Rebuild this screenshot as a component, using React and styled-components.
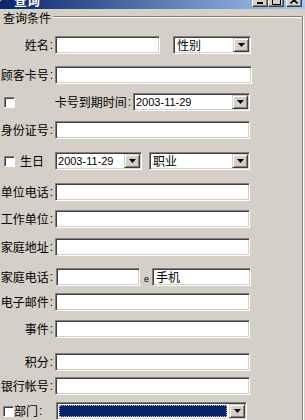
import React from 'react';
import styled, { createGlobalStyle } from 'styled-components';

const GlobalStyle = createGlobalStyle`
  html, body {
    margin: 0;
    padding: 0;
    background: #d4d0c8;
  }
  body {
    font-family: "Noto Sans CJK SC", "Liberation Sans", sans-serif;
  }
`;

const cjk = `"Noto Sans CJK SC", "Liberation Sans", sans-serif`;

const Win = styled.div`
  width: 305px;
  height: 420px;
  overflow: hidden;
  background: #d4d0c8;
  color: #000;
  font-family: ${cjk};
  font-size: 12px;
`;

const TitleBar = styled.div`
  height: 18px;
  margin-top: -9px;
  display: flex;
  align-items: center;
  padding-right: 3px;
  background: linear-gradient(to right, #0a246a, #a6caf0);
`;

const TitleIcon = styled.svg`
  margin-left: -9px;
  flex-shrink: 0;
`;

const Title = styled.span`
  margin-left: 7px;
  color: #fff;
  font-weight: bold;
  font-size: 13px;
  line-height: 18px;
`;

const CapButtons = styled.div`
  margin-left: auto;
  display: flex;
`;

const CapBtn = styled.div`
  width: 16px;
  height: 14px;
  box-sizing: border-box;
  margin-left: ${(p) => p.$gap || 0}px;
  display: flex;
  align-items: center;
  justify-content: center;
  background: #d4d0c8;
  border: 1px solid;
  border-color: #fff #404040 #404040 #fff;
  box-shadow: inset -1px -1px 0 #808080;
`;

const Group = styled.div`
  margin-top: 7px;
  width: 303px;
  height: 420px;
  box-sizing: border-box;
  border-top: 1px solid #808080;
  border-right: 1px solid #808080;
  box-shadow: inset 0 1px 0 #fff, 1px 0 0 #fff;
`;

const Legend = styled.div`
  width: max-content;
  margin-top: -6px;
  padding: 0 2px 0 3px;
  background: #d4d0c8;
  font-size: 12px;
  line-height: 13px;
`;

const Row = styled.div`
  display: flex;
  align-items: center;
  height: 18px;
  margin-top: ${(p) => p.$mt}px;
`;

const Label = styled.div`
  flex-shrink: 0;
  display: flex;
  justify-content: ${(p) => (p.$left ? 'flex-start' : 'flex-end')};
  width: ${(p) => (p.$w ? `${p.$w}px` : 'auto')};
  margin-left: ${(p) => p.$ml || 0}px;
  padding-right: ${(p) => (p.$pr === undefined ? 1 : p.$pr)}px;
  white-space: nowrap;
  font-size: 12px;
  line-height: 14px;
`;

const Colon = styled.span`
  margin-left: 1px;
  font-family: "Liberation Sans", sans-serif;
  font-size: 12px;
`;

const Field = styled.div`
  flex-shrink: 0;
  box-sizing: border-box;
  width: ${(p) => p.$w}px;
  height: 18px;
  margin-left: ${(p) => p.$ml || 0}px;
  padding: 1px;
  display: flex;
  align-items: stretch;
  background: #fff;
  border: 1px solid;
  border-color: #808080 #fff #fff #808080;
  box-shadow: inset 1px 1px 0 #404040, inset -1px -1px 0 #d4d0c8;
`;

const TextInput = styled.input`
  flex: 1;
  min-width: 0;
  margin: 0;
  padding: 0 0 0 2px;
  border: none;
  outline: none;
  background: transparent;
  font-family: ${cjk};
  font-size: 12px;
  line-height: 14px;
  color: #000;
`;

const ComboText = styled.div`
  flex: 1;
  min-width: 0;
  display: flex;
  align-items: center;
  padding-left: ${(p) => (p.$date ? 1 : 2)}px;
  font-family: ${(p) => (p.$date ? '"Liberation Sans", sans-serif' : cjk)};
  font-size: ${(p) => (p.$date ? 11 : 12)}px;
  line-height: 14px;
  white-space: nowrap;
`;

const Selected = styled.div`
  flex: 1;
  margin: 1px 2px 1px 1px;
  background: #0a246a;
  border: 1px dotted #b8b8c8;
`;

const DropBtn = styled.div`
  width: 16px;
  flex-shrink: 0;
  box-sizing: border-box;
  display: flex;
  align-items: center;
  justify-content: center;
  background: #d4d0c8;
  border: 1px solid;
  border-color: #d4d0c8 #404040 #404040 #d4d0c8;
  box-shadow: inset 1px 1px 0 #fff, inset -1px -1px 0 #808080;
`;

const Check = styled.div`
  flex-shrink: 0;
  width: 11px;
  height: 11px;
  box-sizing: border-box;
  margin-left: ${(p) => p.$ml || 0}px;
  background: #fff;
  border: 1px solid;
  border-color: #808080 #fff #fff #808080;
  box-shadow: inset 1px 1px 0 #404040;
`;

const Tiny = styled.span`
  flex-shrink: 0;
  width: 5px;
  margin: 0 3px 0 4px;
  padding-top: 5px;
  font-family: "Liberation Sans", sans-serif;
  font-size: 9px;
  line-height: 9px;
`;

const Arrow = () => (
  <svg width="7" height="4" viewBox="0 0 7 4">
    <path d="M0 0H7L3.5 4Z" fill="#000" />
  </svg>
);

const Combo = ({ w, ml, date, children, selected }) => (
  <Field $w={w} $ml={ml}>
    {selected ? <Selected /> : <ComboText $date={date}>{children}</ComboText>}
    <DropBtn>
      <Arrow />
    </DropBtn>
  </Field>
);

const Input = ({ w, ml, value }) => (
  <Field $w={w} $ml={ml}>
    <TextInput defaultValue={value || ''} readOnly />
  </Field>
);

const FieldLabel = ({ children, w = 53, ...rest }) => (
  <Label $w={w} {...rest}>
    {children}
    <Colon>:</Colon>
  </Label>
);

const App = () => {
  return (
    <>
      <GlobalStyle />
      <Win>
        <TitleBar>
          <TitleIcon width="16" height="16" viewBox="0 0 16 16">
            <path d="M3 15L5 10L13 2L15 4L7 12Z" fill="#f0a030" stroke="#7a4010" strokeWidth="1" />
            <path d="M3 15L5 10L7 12Z" fill="#f4e0b0" />
          </TitleIcon>
          <Title>查询</Title>
          <CapButtons>
            <CapBtn>
              <svg width="8" height="8" viewBox="0 0 8 8">
                <rect x="1" y="6" width="6" height="2" fill="#000" />
              </svg>
            </CapBtn>
            <CapBtn>
              <svg width="9" height="9" viewBox="0 0 9 9">
                <rect x="0.5" y="0.5" width="8" height="8" fill="none" stroke="#000" />
                <rect x="0" y="0" width="9" height="2" fill="#000" />
              </svg>
            </CapBtn>
            <CapBtn $gap={2}>
              <svg width="8" height="8" viewBox="0 0 8 8">
                <path d="M0.5 0.5L7.5 7.5M7.5 0.5L0.5 7.5" stroke="#000" strokeWidth="1.6" />
              </svg>
            </CapBtn>
          </CapButtons>
        </TitleBar>

        <Group>
          <Legend>查询条件</Legend>

          <Row $mt={12}>
            <FieldLabel>姓名</FieldLabel>
            <Input w={105} ml={1} />
            <Combo w={78} ml={13}>性别</Combo>
          </Row>

          <Row $mt={12}>
            <FieldLabel>顾客卡号</FieldLabel>
            <Input w={197} ml={1} />
          </Row>

          <Row $mt={9}>
            <Check $ml={4} />
            <FieldLabel w={116}>卡号到期时间</FieldLabel>
            <Combo w={117} ml={1} date>
              2003-11-29
            </Combo>
          </Row>

          <Row $mt={10}>
            <FieldLabel>身份证号</FieldLabel>
            <Input w={195} ml={1} />
          </Row>

          <Row $mt={13}>
            <Check $ml={4} />
            <Label $ml={5} $pr={0}>
              生日
            </Label>
            <Combo w={87} ml={11} date>
              2003-11-29
            </Combo>
            <Combo w={101} ml={7}>
              职业
            </Combo>
          </Row>

          <Row $mt={13}>
            <FieldLabel>单位电话</FieldLabel>
            <Input w={195} ml={1} />
          </Row>

          <Row $mt={9}>
            <FieldLabel>工作单位</FieldLabel>
            <Input w={195} ml={1} />
          </Row>

          <Row $mt={10}>
            <FieldLabel>家庭地址</FieldLabel>
            <Input w={195} ml={1} />
          </Row>

          <Row $mt={12}>
            <FieldLabel>家庭电话</FieldLabel>
            <Input w={84} ml={2} />
            <Tiny>e</Tiny>
            <Input w={99} value="手机" />
          </Row>

          <Row $mt={7}>
            <FieldLabel>电子邮件</FieldLabel>
            <Input w={195} ml={1} />
          </Row>

          <Row $mt={9}>
            <FieldLabel>事件</FieldLabel>
            <Input w={195} ml={1} />
          </Row>

          <Row $mt={15}>
            <FieldLabel>积分</FieldLabel>
            <Input w={195} ml={1} />
          </Row>

          <Row $mt={6}>
            <FieldLabel>银行帐号</FieldLabel>
            <Input w={195} ml={1} />
          </Row>

          <Row $mt={7}>
            <Check $ml={3} />
            <FieldLabel w={38} $left>
              部门
            </FieldLabel>
            <Combo w={191} ml={3} selected />
          </Row>
        </Group>
      </Win>
    </>
  );
};

export default App;
